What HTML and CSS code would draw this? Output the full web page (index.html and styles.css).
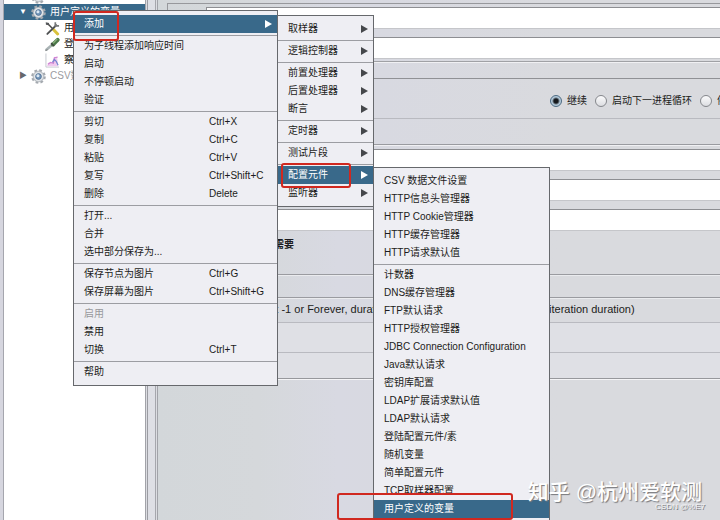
FILE: index.html
```html
<!DOCTYPE html>
<html lang="zh-CN">
<head>
  <meta charset="UTF-8" />
  <meta name="viewport" content="width=device-width, initial-scale=1.0"/>
  <title>JMeter 线程组</title>
  <link rel="stylesheet" href="styles.css">
</head>
<body>

  <!-- Shared icons -->
  <svg class="sprite" aria-hidden="true">
    <symbol id="gear" viewBox="0 0 16 16">
      <circle cx="8" cy="8" r="6.6" fill="none" stroke="#a4a9af" stroke-width="2.4" stroke-dasharray="2.8 2.38"/>
      <circle cx="8" cy="8" r="5.8" fill="#cdd2d7" stroke="#a0a6ad" stroke-width=".7"/>
      <circle cx="8" cy="8" r="4.6" fill="#e9ecef"/>
      <circle cx="8" cy="8" r="3.1" fill="#6f93b8" stroke="#4d6c8c" stroke-width=".8"/>
      <circle cx="7.4" cy="7.2" r="1.6" fill="#dbe8f3"/>
    </symbol>
  </svg>

  <div class="app">
    <nav class="tree">
      <div class="tree-row scrolled"><svg class="icon"><use href="#gear"/></svg></div>
      <div class="tree-row selected">
        <span class="toggle">▼</span>
        <svg class="icon"><use href="#gear"/></svg>
        <span>用户定义的变量</span>
      </div>
      <div class="tree-row child">
        <svg class="icon" viewBox="0 0 16 16">
          <path d="M3 3 9 9" stroke="#4a4a48" stroke-width="1.6"/>
          <path d="M.8 1.4 4.4 2.2 4 4.6 1 4z" fill="#55575a"/>
          <path d="M9 9 13.5 13.8" stroke="#d9c23b" stroke-width="3.2" stroke-linecap="round"/>
          <path d="M12 4.5 2.5 13.8" stroke="#4f5152" stroke-width="2" stroke-linecap="round"/>
          <path d="M11 1.2 11 5.2 15 5.2" fill="none" stroke="#77797a" stroke-width="1.8"/>
        </svg>
        <span>用户参数</span>
      </div>
      <div class="tree-row child">
        <svg class="icon" viewBox="0 0 16 16">
          <path d="M1.5 13.5 8 8" stroke="#a9b3b5" stroke-width="2.8" stroke-linecap="round"/>
          <path d="M.5 15 2.5 13" stroke="#777" stroke-width="1"/>
          <path d="M8.5 8 13.5 3" stroke="#4b7848" stroke-width="4.2" stroke-linecap="round"/>
          <path d="M8.5 6.8 13 2.3" stroke="#8fb582" stroke-width="1.2"/>
          <path d="M6.4 6.4 9.8 9.8" stroke="#444" stroke-width="1.3"/>
        </svg>
        <span>登录请求</span>
      </div>
      <div class="tree-row child">
        <svg class="icon" viewBox="0 0 16 16">
          <path d="M1 .5v14.5H15" fill="none" stroke="#c3c6cd" stroke-width="1"/>
          <path d="M2 14 4 10 7 10 10 4 13 5 14 14z" fill="#efc9ee"/>
          <path d="M3 12 6 10 9 11 10 5 13.5 4.5" fill="none" stroke="#cf83d2" stroke-width="1.3"/>
          <path d="M8 10 10 7 12 9 14 13" fill="none" stroke="#7487cf" stroke-width="1.3"/>
        </svg>
        <span>察看结果树</span>
      </div>
      <div class="tree-row disabled">
        <span class="toggle">▶</span>
        <svg class="icon"><use href="#gear"/></svg>
        <span>CSV数据</span>
      </div>
    </nav>

    <div class="divider"></div>

    <main class="main">
      <section class="panel title-panel">
        <label class="field"><span>名称：</span><input type="text"></label>
        <label class="field"><span>注释：</span><input type="text"></label>
      </section>

      <div class="band error-title"></div>
      <div class="band error-action">
        <label><input type="radio" name="onError" checked>继续</label>
        <label><input type="radio" name="onError">启动下一进程循环</label>
        <label><input type="radio" name="onError">停止线程</label>
      </div>
      <div class="band spacer"></div>

      <section class="panel thread-panel">
        <label class="field"><span>线程：</span><input type="text"></label>
        <label class="field"><span>时间：</span><input type="text"></label>
        <label class="field"><span>循环：</span><input type="text"></label>
      </section>

      <div class="band delay">
        <label><input type="checkbox">延迟创建线程直到需要</label>
      </div>
      <div class="band scheduler"></div>
      <div class="band hint">If Loop Count is not -1 or Forever, duration will be min(Delay, Loop Count * iteration duration)</div>
      <div class="band duration"></div>
      <div class="band startup"></div>
    </main>
  </div>

  <!-- Context menu -->
  <ul class="menu menu-root">
    <li><button class="active">添加<i></i></button></li>
    <li class="sep"></li>
    <li><button>为子线程添加响应时间</button></li>
    <li><button>启动</button></li>
    <li><button>不停顿启动</button></li>
    <li><button>验证</button></li>
    <li class="sep"></li>
    <li><button>剪切<kbd>Ctrl+X</kbd></button></li>
    <li><button>复制<kbd>Ctrl+C</kbd></button></li>
    <li><button>粘贴<kbd>Ctrl+V</kbd></button></li>
    <li><button>复写<kbd>Ctrl+Shift+C</kbd></button></li>
    <li><button>删除<kbd>Delete</kbd></button></li>
    <li class="sep"></li>
    <li><button>打开...</button></li>
    <li><button>合并</button></li>
    <li><button>选中部分保存为...</button></li>
    <li class="sep"></li>
    <li><button>保存节点为图片<kbd>Ctrl+G</kbd></button></li>
    <li><button>保存屏幕为图片<kbd>Ctrl+Shift+G</kbd></button></li>
    <li class="sep"></li>
    <li><button disabled>启用</button></li>
    <li><button>禁用</button></li>
    <li><button>切换<kbd>Ctrl+T</kbd></button></li>
    <li class="sep"></li>
    <li><button>帮助</button></li>
  </ul>

  <ul class="menu menu-add">
    <li><button>取样器<i></i></button></li>
    <li class="sep"></li>
    <li><button>逻辑控制器<i></i></button></li>
    <li class="sep"></li>
    <li><button>前置处理器<i></i></button></li>
    <li><button>后置处理器<i></i></button></li>
    <li><button>断言<i></i></button></li>
    <li class="sep"></li>
    <li><button>定时器<i></i></button></li>
    <li class="sep"></li>
    <li><button>测试片段<i></i></button></li>
    <li class="sep"></li>
    <li><button class="active">配置元件<i></i></button></li>
    <li><button>监听器<i></i></button></li>
  </ul>

  <ul class="menu menu-config">
    <li><button>CSV 数据文件设置</button></li>
    <li><button>HTTP信息头管理器</button></li>
    <li><button>HTTP Cookie管理器</button></li>
    <li><button>HTTP缓存管理器</button></li>
    <li><button>HTTP请求默认值</button></li>
    <li class="sep"></li>
    <li><button>计数器</button></li>
    <li><button>DNS缓存管理器</button></li>
    <li><button>FTP默认请求</button></li>
    <li><button>HTTP授权管理器</button></li>
    <li><button>JDBC Connection Configuration</button></li>
    <li><button>Java默认请求</button></li>
    <li><button>密钥库配置</button></li>
    <li><button>LDAP扩展请求默认值</button></li>
    <li><button>LDAP默认请求</button></li>
    <li><button>登陆配置元件/素</button></li>
    <li><button>随机变量</button></li>
    <li><button>简单配置元件</button></li>
    <li><button>TCP取样器配置</button></li>
    <li><button class="active">用户定义的变量</button></li>
  </ul>

  <!-- Highlight marks -->
  <div class="mark mark-add"></div>
  <div class="mark mark-config"></div>
  <div class="mark mark-variables"></div>

  <div class="watermark">知乎 @杭州爱软测</div>
  <div class="credit">CSDN @%E7</div>

</body>
</html>
```
FILE: styles.css
```css
* {
  box-sizing: border-box;
  margin: 0;
  padding: 0;
}

body {
  font-family: "Liberation Sans", "Noto Sans CJK SC", sans-serif;
  font-size: 10px;
  line-height: 16px;
  color: #1c1c20;
  background: #d9dade;
  position: relative;
  height: 100vh;
  overflow: hidden;
}

button,
input,
kbd {
  font: inherit;
  color: inherit;
}

.sprite {
  display: none;
}

.app {
  display: flex;
  height: 100%;
}

/* Tree */
.tree {
  flex: 0 0 145px;
  background: #fff;
  border-left: 3px solid #d6d6df;
  box-shadow: inset 1px 0 #a5a6ae;
  padding-left: 1px;
  overflow: hidden;
}

.tree-row {
  display: flex;
  align-items: center;
  gap: 4px;
  height: 16px;
  padding-left: 15px;
  white-space: nowrap;
}

.tree-row.scrolled {
  margin-top: -12px;
  padding-left: 27px;
}

.tree-row.selected {
  background: #39698a;
  color: #fff;
}

.tree-row.child {
  padding-left: 41px;
}

.tree-row.disabled {
  color: #9b9b9f;
}

.toggle {
  flex: 0 0 8px;
  font-size: 8px;
}

.disabled .toggle {
  color: #66686c;
}

.icon {
  flex: 0 0 15px;
  width: 15px;
  height: 15px;
}

.divider {
  flex: 0 0 13px;
  border: solid #a2a3a9;
  border-width: 0 1px;
  background: linear-gradient(to right, #dcdde2 1px, #9b9ca2 1px, #9b9ca2 2px, #dedfe5 2px, #dedfe5 9px, #a6a7ad 9px, #a6a7ad 10px, #dcdde2 10px);
}

/* Right side form */
.main {
  flex: 1;
  min-width: 0;
  background: linear-gradient(to right, #d3d7da, #d5d8db 100px, #d8d9e2 180px, #d8d9e1 220px, #d9dade 400px);
  padding-top: 3px;
}

.panel {
  display: flex;
  flex-direction: column;
  gap: 8px;
  padding: 3px 0 2px 2px;
  margin-left: 9px;
  border: solid #97989c;
  border-width: 1px 0 0 1px;
}

.field {
  display: flex;
  line-height: 22px;
}

.field span {
  flex: 0 0 36px;
}

.field input {
  flex: 1;
  min-width: 0;
  height: 22px;
  border: 1px solid #8d8e92;
  border-right: 0;
  border-bottom-color: #c5c6ca;
  background: #fff;
}

.thread-panel {
  padding-bottom: 0;
  border-top-color: #f0f0f3;
}

.band {
  border-bottom: 1px solid #b9bac0;
}

.error-title {
  height: 18px;
  border-top: 1px solid #a0a1a5;
  border-bottom-color: #909195;
  box-shadow: inset 0 1px #f0f0f3;
}

.error-action {
  display: flex;
  align-items: center;
  gap: 8px;
  height: 40px;
  padding: 4px 0 0 392px;
  white-space: nowrap;
  overflow: hidden;
}

.error-action label {
  display: flex;
  align-items: center;
  gap: 5px;
}

.error-action input {
  appearance: none;
  flex: none;
  width: 12px;
  height: 12px;
  border: 1px solid #85878c;
  border-radius: 50%;
  background: linear-gradient(#fbfbfc, #dcdde1);
}

.error-action input:checked {
  border-color: #4c6a82;
  background: radial-gradient(circle, #15181c 2px, #b4cadb 4px);
}

.spacer {
  height: 26px;
  border-bottom-color: #9a9ba0;
}

.delay {
  height: 44px;
  padding: 6px 0 0 20px;
  border-bottom-color: #9a9ba0;
  box-shadow: 0 1px #eaebee;
}

.delay label {
  display: flex;
  align-items: center;
  gap: 4px;
  font-weight: bold;
}

.delay input {
  width: 12px;
  height: 12px;
}

.scheduler {
  height: 23px;
  border-bottom-color: #9a9ba0;
  box-shadow: 0 1px #eaebee;
}

.hint {
  height: 25px;
  padding: 3px 0 0 25px;
  font-size: 11px;
  white-space: nowrap;
  overflow: hidden;
}

.duration {
  height: 30px;
  background: #dfe0e5;
}

.startup {
  height: 26px;
  background: #dfe0e5;
  border-bottom-color: #97989c;
  box-shadow: 0 1px #f4f4f6;
}

/* Popup menus */
.menu {
  position: absolute;
  list-style: none;
  padding: 4px 0;
  background: #eeeef3;
  border: 1px solid #66686c;
}

.menu-root {
  left: 73px;
  top: 10px;
  width: 205px;
}

.menu-add {
  left: 277px;
  top: 15px;
  width: 97px;
}

.menu-config {
  left: 373px;
  top: 167px;
  width: 177px;
}

.menu button {
  display: flex;
  align-items: center;
  width: 100%;
  height: 18px;
  padding: 0 5px 0 10px;
  border: 0;
  background: none;
  text-align: left;
  white-space: nowrap;
}

.menu button.active {
  background: #39698a;
  color: #fff;
}

.menu button:disabled {
  color: #98989c;
}

.menu kbd {
  width: 63px;
  margin-left: auto;
}

.menu i {
  margin-left: auto;
  border: solid transparent;
  border-width: 4px 0 4px 7px;
  border-left-color: #45474b;
}

.menu .active i {
  border-left-color: #fff;
}

.sep {
  height: 4px;
  background: linear-gradient(transparent 2px, #9c9da2 2px, #9c9da2 3px, transparent 3px);
}

/* Red marks over the menus */
.mark {
  position: absolute;
  border: 2px solid #d0281f;
  border-radius: 3px;
}

.mark-add {
  left: 73px;
  top: 11px;
  width: 46px;
  height: 30px;
}

.mark-config {
  left: 281px;
  top: 163px;
  width: 70px;
  height: 25px;
}

.mark-variables {
  left: 337px;
  top: 493px;
  width: 176px;
  height: 27px;
}

.watermark,
.credit {
  position: absolute;
  white-space: nowrap;
  color: #fff;
}

.watermark {
  right: 18px;
  top: 477px;
  font-size: 21px;
  font-weight: 500;
  line-height: 30px;
  text-shadow: 1px 1px 1px #77787c;
}

.credit {
  right: 15px;
  top: 499px;
  font-size: 8px;
  color: #f2f2f4;
  text-shadow: 1px 1px #77787c;
}
```
